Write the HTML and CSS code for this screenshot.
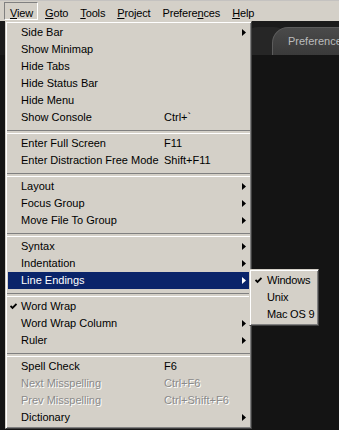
FILE: index.html
```html
<!DOCTYPE html>
<html>
<head>
<meta charset="utf-8">
<link rel="stylesheet" href="styles.css">
</head>
<body>
<div class="menubar">
  <span class="mb-item active"><u>V</u>iew</span>
  <span class="mb-item"><u>G</u>oto</span>
  <span class="mb-item"><u>T</u>ools</span>
  <span class="mb-item"><u>P</u>roject</span>
  <span class="mb-item">Prefere<u>n</u>ces</span>
  <span class="mb-item"><u>H</u>elp</span>
</div>
<div class="workspace">
  <div class="tabbar">
    <div class="tab dim"></div>
    <div class="tab current">Preferences</div>
  </div>

  <div class="menu main">
    <div class="item"><span class="check"></span><span class="label">Side Bar</span><span class="key"></span><svg class="arrow" width="4" height="7" viewBox="0 0 4 7"><polygon points="0,0 4,3.5 0,7"/></svg></div>
    <div class="item"><span class="check"></span><span class="label">Show Minimap</span><span class="key"></span><span></span></div>
    <div class="item"><span class="check"></span><span class="label">Hide Tabs</span><span class="key"></span><span></span></div>
    <div class="item"><span class="check"></span><span class="label">Hide Status Bar</span><span class="key"></span><span></span></div>
    <div class="item"><span class="check"></span><span class="label">Hide Menu</span><span class="key"></span><span></span></div>
    <div class="item"><span class="check"></span><span class="label">Show Console</span><span class="key">Ctrl+`</span><span></span></div>
    <div class="sep"></div>
    <div class="item"><span class="check"></span><span class="label">Enter Full Screen</span><span class="key">F11</span><span></span></div>
    <div class="item"><span class="check"></span><span class="label">Enter Distraction Free Mode</span><span class="key">Shift+F11</span><span></span></div>
    <div class="sep"></div>
    <div class="item"><span class="check"></span><span class="label">Layout</span><span class="key"></span><svg class="arrow" width="4" height="7" viewBox="0 0 4 7"><polygon points="0,0 4,3.5 0,7"/></svg></div>
    <div class="item"><span class="check"></span><span class="label">Focus Group</span><span class="key"></span><svg class="arrow" width="4" height="7" viewBox="0 0 4 7"><polygon points="0,0 4,3.5 0,7"/></svg></div>
    <div class="item"><span class="check"></span><span class="label">Move File To Group</span><span class="key"></span><svg class="arrow" width="4" height="7" viewBox="0 0 4 7"><polygon points="0,0 4,3.5 0,7"/></svg></div>
    <div class="sep"></div>
    <div class="item"><span class="check"></span><span class="label">Syntax</span><span class="key"></span><svg class="arrow" width="4" height="7" viewBox="0 0 4 7"><polygon points="0,0 4,3.5 0,7"/></svg></div>
    <div class="item"><span class="check"></span><span class="label">Indentation</span><span class="key"></span><svg class="arrow" width="4" height="7" viewBox="0 0 4 7"><polygon points="0,0 4,3.5 0,7"/></svg></div>
    <div class="item hot"><span class="check"></span><span class="label">Line Endings</span><span class="key"></span><svg class="arrow" width="4" height="7" viewBox="0 0 4 7"><polygon points="0,0 4,3.5 0,7"/></svg></div>
    <div class="sep"></div>
    <div class="item"><span class="check"><svg width="7" height="7" viewBox="0 0 7 7"><polyline points="0.5,3 2.5,5 6.5,1" fill="none" stroke="#000" stroke-width="1.8"/></svg></span><span class="label">Word Wrap</span><span class="key"></span><span></span></div>
    <div class="item"><span class="check"></span><span class="label">Word Wrap Column</span><span class="key"></span><svg class="arrow" width="4" height="7" viewBox="0 0 4 7"><polygon points="0,0 4,3.5 0,7"/></svg></div>
    <div class="item"><span class="check"></span><span class="label">Ruler</span><span class="key"></span><svg class="arrow" width="4" height="7" viewBox="0 0 4 7"><polygon points="0,0 4,3.5 0,7"/></svg></div>
    <div class="sep"></div>
    <div class="item"><span class="check"></span><span class="label">Spell Check</span><span class="key">F6</span><span></span></div>
    <div class="item disabled"><span class="check"></span><span class="label">Next Misspelling</span><span class="key">Ctrl+F6</span><span></span></div>
    <div class="item disabled"><span class="check"></span><span class="label">Prev Misspelling</span><span class="key">Ctrl+Shift+F6</span><span></span></div>
    <div class="item"><span class="check"></span><span class="label">Dictionary</span><span class="key"></span><svg class="arrow" width="4" height="7" viewBox="0 0 4 7"><polygon points="0,0 4,3.5 0,7"/></svg></div>
  </div>

  <div class="menu sub">
    <div class="sitem"><span class="check"><svg width="7" height="7" viewBox="0 0 7 7"><polyline points="0.5,3 2.5,5 6.5,1" fill="none" stroke="#000" stroke-width="1.8"/></svg></span><span class="label">Windows</span></div>
    <div class="sitem"><span class="check"></span><span class="label">Unix</span></div>
    <div class="sitem"><span class="check"></span><span class="label">Mac OS 9</span></div>
  </div>
</div>
</body>
</html>
```

FILE: styles.css
```css
* { box-sizing: border-box; }
html, body {
  margin: 0;
  padding: 0;
}
body {
  width: 339px;
  height: 430px;
  overflow: hidden;
  background: #141414;
  font-family: "Liberation Sans", Arial, sans-serif;
  font-size: 11px;
  color: #000;
}
.menubar {
  height: 21px;
  background: #d4d0c8;
  border-top: 1px solid #c4c2c0;
  display: flex;
  align-items: flex-start;
  padding: 1px 0 0 4px;
  letter-spacing: -0.15px;
}
.mb-item {
  height: 18px;
  padding: 2px 4px 0 5px;
  margin-right: 1px;
  line-height: 16px;
  border: 1px solid transparent;
  white-space: nowrap;
}
.mb-item.active {
  border-color: #808080 #fff #fff #808080;
}
.mb-item u { text-decoration: underline; }

.workspace {
  position: relative;
  height: 409px;
  background: #141414;
}
.tabbar {
  height: 34px;
  padding: 6px 0 0 244px;
  display: flex;
  background: #1b1b1b;
}
.tab {
  height: 28px;
  flex: none;
}
.tab.dim {
  width: 44px;
  background: #262626;
  border-radius: 14px 14px 0 0;
}
.tab.current {
  width: 130px;
  margin-left: -16px;
  background: linear-gradient(#4a4a4a, #3a3a3a);
  border: 1px solid #5c5c5c;
  border-bottom: none;
  border-radius: 16px 8px 0 0;
  color: #bcbcbc;
  font-size: 11px;
  line-height: 26px;
  padding-left: 15px;
  white-space: nowrap;
}

.menu {
  position: absolute;
  background: #d4d0c8;
  border: 1px solid;
  border-color: #d4d0c8 #404040 #404040 #d4d0c8;
  box-shadow: inset 1px 1px #fff, inset -1px -1px #808080;
  padding: 2px;
}
.menu.main {
  left: 5px;
  top: 0;
  width: 247px;
}
.menu.sub {
  left: 249px;
  top: 248px;
  width: 70px;
  letter-spacing: -0.2px;
}
.item {
  height: 17px;
  line-height: 17px;
  display: grid;
  grid-template-columns: 13px 143px 1fr 4px;
  align-items: center;
  padding-right: 3px;
  white-space: nowrap;
}
.sitem {
  height: 17px;
  line-height: 17px;
  display: grid;
  grid-template-columns: 15px 1fr;
  align-items: center;
  white-space: nowrap;
}
.check {
  display: flex;
  align-items: center;
  padding-left: 2px;
  height: 17px;
}
.sitem .check { padding-left: 3px; }
.check svg { display: block; }
.arrow { display: block; fill: #000; }
.item.hot {
  background: #0a246a;
  color: #fff;
}
.item.hot .arrow { fill: #fff; }
.item.disabled {
  color: #8a8a8a;
  text-shadow: 1px 1px 0 #fff;
}
.sep {
  height: 9px;
  margin: 0 -1px;
  padding-top: 4px;
}
.sep::before {
  content: "";
  display: block;
  height: 2px;
  border-top: 1px solid #808080;
  border-bottom: 1px solid #fff;
}
```
